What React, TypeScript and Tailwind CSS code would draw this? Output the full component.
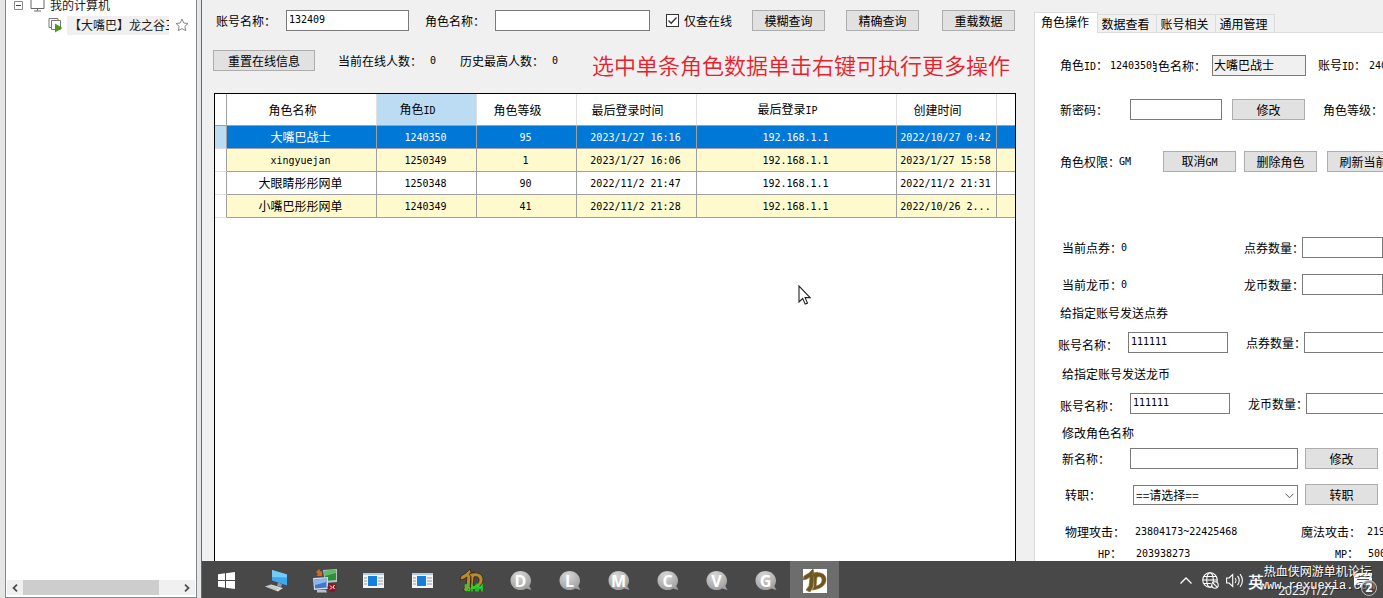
import React from "react";

const mono = "font-['DejaVu_Sans_Mono','Noto_Sans_CJK_SC',monospace] text-[10px]";
const field =
  "h-[21px] shrink-0 border border-[#7a7a7a] bg-white px-0.5 pb-[3px] outline-none font-['DejaVu_Sans_Mono','Noto_Sans_CJK_SC',monospace] text-[10px] leading-[16px]";
const btn =
  "flex h-[21px] shrink-0 items-center justify-center overflow-hidden whitespace-nowrap border border-[#adadad] bg-[#e1e1e1]";

/* Latin runs are set in the monospace face, half an ideograph wide. */
function Mix({ text }: { text: string }) {
  return (
    <>
      {text.split(/([\x20-\x7e]+)/).map((part, i) =>
        i % 2 ? (
          <span key={i} className={mono + " whitespace-pre"}>
            {part}
          </span>
        ) : (
          part
        )
      )}
    </>
  );
}

function Btn({ text, className = "w-[73px]" }: { text: string; className?: string }) {
  return (
    <button type="button" className={`${btn} ${className}`}>
      <span>
        <Mix text={text} />
      </span>
    </button>
  );
}

function Sidebar() {
  return (
    <aside className="flex w-[202px] shrink-0 border-r border-[#696969] bg-[#e6e6e6] pl-[5px] pr-1">
      <div className="flex min-w-0 flex-1 flex-col overflow-hidden border-x border-b border-[#828790] bg-white text-[#1a1a1a]">
        <div className="-mt-[5px] flex h-5 shrink-0 items-center pl-2">
          <svg className="mr-[7px] size-[9px]" viewBox="0 0 9 9" fill="none" stroke="#8c8c8c">
            <path d="M.5.5h8v8h-8z" />
            <path d="M2 4.500h5" stroke="#444" />
          </svg>
          <svg className="mr-[5px] h-[13px] w-[15px]" viewBox="0 0 15 13" fill="none" stroke="#666">
            <path d="M1 .5h13v9H1zM7.500 9.500v2M4 12h7" />
          </svg>
          <span>我的计算机</span>
        </div>
        <div className="flex h-5 shrink-0 items-center pl-[42px]">
          <svg className="mr-1 h-4 w-[15px]" viewBox="0 0 15 16" fill="none" stroke="#777">
            <path d="M3 10.500H1V1.500h9v2" />
            <path d="M3.500 3.500h9v9h-9z" fill="#fff" />
            <path d="M7 6.500l7.500 4.500L7 15.500z" fill="#4a9a1c" stroke="none" />
          </svg>
          <span className="h-[19px] w-[102px] overflow-hidden whitespace-nowrap bg-[#f0f0f0] pl-0.5 leading-[17px]">
            【大嘴巴】龙之谷三
          </span>
          <svg className="ml-[6px] size-[14px]" viewBox="0 0 14 14" fill="none" stroke="#888">
            <path d="M7 1l1.800 4 4.200.5-3.200 2.900 1 4.300L7 10.600 3.200 12.700l1-4.300L1 5.500 5.200 5z" />
          </svg>
        </div>
        <div className="mx-px mb-0.5 mt-auto flex h-[15px] shrink-0 items-stretch bg-[#f0f0f0]">
          <button type="button" aria-label="向左" className="flex w-4 items-center justify-center">
            <svg className="h-2 w-[6px]" viewBox="0 0 6 8" fill="none" stroke="#505050" strokeWidth="1.800">
              <path d="M5 .7L1.500 4 5 7.300" />
            </svg>
          </button>
          <div className="flex-1">
            <div className="h-full w-[87%] bg-[#cdcdcd]" />
          </div>
          <button type="button" aria-label="向右" className="flex w-4 items-center justify-center">
            <svg className="h-2 w-[6px]" viewBox="0 0 6 8" fill="none" stroke="#505050" strokeWidth="1.800">
              <path d="M1 .7L4.500 4 1 7.300" />
            </svg>
          </button>
        </div>
      </div>
    </aside>
  );
}

const columns = [
  { title: "角色名称", width: "w-[150px]" },
  { title: "角色ID", width: "w-[100px]" },
  { title: "角色等级", width: "w-[100px]" },
  { title: "最后登录时间", width: "w-[120px]" },
  { title: "最后登录IP", width: "w-[200px]" },
  { title: "创建时间", width: "w-[100px]" },
];

const rows = [
  ["大嘴巴战士", "1240350", "95", "2023/1/27 16:16", "192.168.1.1", "2022/10/27 0:42"],
  ["xingyuejan", "1250349", "1", "2023/1/27 16:06", "192.168.1.1", "2023/1/27 15:58"],
  ["大眼睛彤彤网单", "1250348", "90", "2022/11/2 21:47", "192.168.1.1", "2022/11/2 21:31"],
  ["小嘴巴彤彤网单", "1240349", "41", "2022/11/2 21:28", "192.168.1.1", "2022/10/26 2..."],
];

function RoleTable() {
  return (
    <div className="relative mt-[22px] min-h-0 flex-1 overflow-hidden border-x border-t border-black bg-white">
      <table className="w-full table-fixed border-separate border-spacing-0">
        <thead>
          <tr className="h-8">
            <th className="w-3 border-b border-r border-[#a0a0a0] p-0" />
            {columns.map((c, i) => (
              <th
                key={c.title}
                className={`${c.width} border-b border-r border-b-[#a0a0a0] border-r-[#e0e0e0] p-0 pr-[18px] font-normal ${
                  i === 1 ? "bg-[#bcdcf4]" : ""
                }`}
              >
                <Mix text={c.title} />
              </th>
            ))}
            <th className="border-b border-[#a0a0a0] p-0" />
          </tr>
        </thead>
        <tbody>
          {rows.map((r, i) => {
            const tone = i === 0 ? "bg-[#0078d7] text-white" : i % 2 ? "bg-[#fffacd]" : "bg-white";
            return (
              <tr key={r[1]} className="h-[23px]">
                <td
                  className={`border-b border-r border-b-[#e0e0e0] border-r-[#a0a0a0] p-0 ${
                    i === 0 ? "bg-[#bcdcf4]" : ""
                  }`}
                />
                {r.map((v, j) => (
                  <td
                    key={j}
                    className={`${tone} whitespace-nowrap border-b border-r border-[#a0a0a0] p-0 pr-0.5 text-center`}
                  >
                    <Mix text={v} />
                  </td>
                ))}
                <td className={`${tone} border-b border-[#a0a0a0] p-0`} />
              </tr>
            );
          })}
        </tbody>
      </table>
      <svg
        className="absolute left-[583px] top-[191px] h-5 w-[13px]"
        viewBox="0 0 13 20"
        fill="#fff"
        stroke="#222"
        strokeWidth="1.100"
      >
        <path d="M1 1v16l3.700-3.500 2.500 5.600 2.300-1-2.400-5.500h5z" />
      </svg>
    </div>
  );
}

function MainPanel() {
  return (
    <main className="flex min-w-0 flex-1 flex-col pl-3 pr-[18px] pt-[10px]">
      <div className="flex h-[21px] shrink-0 items-center whitespace-nowrap">
        <label htmlFor="account" className="ml-0.5 w-[70px]">
          账号名称：
        </label>
        <input id="account" defaultValue="132409" className={`${field} w-[123px]`} />
        <label htmlFor="role" className="ml-4 w-[70px]">
          角色名称：
        </label>
        <input id="role" className={`${field} w-[155px]`} />
        <label className="ml-4 mr-5 flex items-center gap-[5px]">
          <span className="relative flex size-[13px]">
            <input
              type="checkbox"
              defaultChecked
              className="peer size-[13px] appearance-none border border-[#333] bg-white"
            />
            <svg
              className="pointer-events-none absolute inset-0 hidden size-[13px] peer-checked:block"
              viewBox="0 0 13 13"
              fill="none"
              stroke="#333"
              strokeWidth="1.300"
            >
              <path d="M2.500 6.500l2.700 2.800 5.300-5.800" />
            </svg>
          </span>
          仅查在线
        </label>
        <Btn text="模糊查询" />
        <Btn text="精确查询" className="ml-[21px] w-[73px]" />
        <Btn text="重载数据" className="ml-[23px] w-[73px]" />
      </div>
      <div className="mt-[19px] flex h-[21px] shrink-0 items-center whitespace-nowrap">
        <Btn text="重置在线信息" className="-ml-px w-[102px]" />
        <span className="ml-[23px] w-[92px]">当前在线人数：</span>
        <span className={`${mono} w-[30px]`}>0</span>
        <span className="w-[92px]">历史最高人数：</span>
        <span className={`${mono} w-10`}>0</span>
        <strong className="pt-[7px] text-[22px] font-[350] leading-[22px] text-[#e8202c]">
          选中单条角色数据单击右键可执行更多操作
        </strong>
      </div>
      <RoleTable />
    </main>
  );
}

function Row({ className, children }: { className: string; children: React.ReactNode }) {
  return <div className={`flex shrink-0 items-center whitespace-nowrap ${className}`}>{children}</div>;
}

function RolePanel() {
  return (
    <section className="flex w-[349px] shrink-0 flex-col overflow-hidden pt-3">
      <div role="tablist" className="z-10 -mb-px flex shrink-0 items-end">
        <button
          type="button"
          role="tab"
          aria-selected="true"
          className="h-[21px] w-16 border border-b-0 border-[#dcdcdc] bg-white pb-[3px] pr-0.5 leading-[17px]"
        >
          角色操作
        </button>
        {["数据查看", "账号相关", "通用管理"].map((t) => (
          <button
            key={t}
            type="button"
            role="tab"
            aria-selected="false"
            className="h-[19px] w-[59px] border border-l-0 border-[#dcdcdc] bg-[#f0f0f0] pr-[3px] leading-[17px]"
          >
            {t}
          </button>
        ))}
      </div>
      <div className="min-h-0 flex-1 overflow-hidden border-l border-t border-[#dcdcdc] bg-white pl-[25px]">
        <Row className="mt-[22px] h-[21px]">
          <span className="w-[50px] shrink-0">
            <Mix text="角色ID：" />
          </span>
          <span className={`${mono} w-[43px] shrink-0`}>1240350</span>
          <label htmlFor="roleName" className="mr-[6px] flex w-[53px] shrink-0 justify-end overflow-hidden">
            角色名称：
          </label>
          <input
            id="roleName"
            readOnly
            defaultValue="大嘴巴战士"
            className="h-[21px] w-[94px] shrink-0 border border-[#7a7a7a] bg-[#f0f0f0] px-px pb-[3px] leading-[16px] outline-none"
          />
          <span className="ml-3 w-[51px] shrink-0">
            <Mix text="账号ID：" />
          </span>
          <span className={mono}>240350</span>
        </Row>
        <Row className="mt-[23px] h-[21px]">
          <label htmlFor="pwd" className="w-[70px] shrink-0">
            新密码：
          </label>
          <input id="pwd" className={`${field} mr-[10px] w-[92px]`} />
          <Btn text="修改" />
          <span className="ml-[18px]">角色等级：</span>
        </Row>
        <Row className="mt-[31px] h-[21px]">
          <span className="w-[59px] shrink-0">角色权限：</span>
          <span className={`${mono} w-11 shrink-0`}>GM</span>
          <Btn text="取消GM" />
          <Btn text="删除角色" className="ml-2 w-[73px]" />
          <Btn text="刷新当前" className="ml-[10px] w-[73px]" />
        </Row>
        <Row className="mt-[65px] h-[21px] pl-0.5">
          <span className="w-[59px] shrink-0">当前点券：</span>
          <span className={`${mono} w-[123px] shrink-0`}>0</span>
          <label htmlFor="coupon" className="w-[58px] shrink-0">
            点券数量：
          </label>
          <input id="coupon" className={`${field} w-[81px]`} />
        </Row>
        <Row className="mt-4 h-[21px] pl-0.5">
          <span className="w-[59px] shrink-0">当前龙币：</span>
          <span className={`${mono} w-[123px] shrink-0`}>0</span>
          <label htmlFor="coin" className="w-[58px] shrink-0">
            龙币数量：
          </label>
          <input id="coin" className={`${field} w-[81px]`} />
        </Row>
        <Row className="mt-[9px] h-[18px]">给指定账号发送点券</Row>
        <Row className="-ml-0.5 mt-[10px] h-[21px]">
          <label htmlFor="sendA" className="w-[70px] shrink-0 pt-1">
            账号名称：
          </label>
          <input id="sendA" defaultValue="111111" className={`${field} mr-[18px] w-[100px]`} />
          <label htmlFor="sendACount" className="w-[58px] shrink-0">
            点券数量：
          </label>
          <input id="sendACount" className={`${field} w-[100px]`} />
        </Row>
        <Row className="mt-3 h-[18px] pl-0.5">给指定账号发送龙币</Row>
        <Row className="mt-[10px] h-[21px]">
          <label htmlFor="sendB" className="w-[70px] shrink-0 pt-1">
            账号名称：
          </label>
          <input id="sendB" defaultValue="111111" className={`${field} mr-[18px] w-[100px]`} />
          <label htmlFor="sendBCount" className="w-[58px] shrink-0">
            龙币数量：
          </label>
          <input id="sendBCount" className={`${field} w-[100px]`} />
        </Row>
        <Row className="mt-[10px] h-[18px] pl-0.5">修改角色名称</Row>
        <Row className="mt-[6px] h-[21px] pl-0.5">
          <label htmlFor="newName" className="w-[68px] shrink-0">
            新名称：
          </label>
          <input id="newName" className={`${field} mr-[7px] w-[168px]`} />
          <Btn text="修改" />
        </Row>
        <Row className="mt-[15px] h-[21px] pl-[5px]">
          <label htmlFor="job" className="w-[68px] shrink-0">
            转职：
          </label>
          <span className="relative mr-[7px] flex w-[165px] shrink-0">
            <select
              id="job"
              className="h-5 w-full appearance-none border border-[#7a7a7a] bg-white px-0.5 leading-[16px] outline-none"
            >
              <option>==请选择==</option>
            </select>
            <svg
              className="pointer-events-none absolute right-1 top-2 h-[6px] w-[9px]"
              viewBox="0 0 9 6"
              fill="none"
              stroke="#555"
            >
              <path d="M.5.700l4 4 4-4" />
            </svg>
          </span>
          <Btn text="转职" />
        </Row>
        <Row className="mt-[18px] h-[18px] pl-[5px]">
          <span className="w-[70px] shrink-0">物理攻击：</span>
          <span className={`${mono} w-[166px] shrink-0`}>23804173~22425468</span>
          <span className="w-[66px] shrink-0">魔法攻击：</span>
          <span className={mono}>219041</span>
        </Row>
        <Row className="mt-1 h-[18px] pl-[5px]">
          <span className="w-[71px] shrink-0 pl-[33px]">
            <Mix text="HP：" />
          </span>
          <span className={`${mono} w-[165px] shrink-0`}>203938273</span>
          <span className="w-[67px] shrink-0 pl-[34px]">
            <Mix text="MP：" />
          </span>
          <span className={mono}>500000</span>
        </Row>
      </div>
    </section>
  );
}

function Orb({ letter }: { letter: string }) {
  return (
    <span className="relative flex size-[21px] items-center justify-center">
      <svg className="absolute inset-0 size-[23px]" viewBox="0 0 23 23">
        <defs>
          <radialGradient id={`orb${letter}`} cx="40%" cy="25%" r="80%">
            <stop offset="0" stopColor="#d8d8d8" />
            <stop offset="1" stopColor="#9c9c9c" />
          </radialGradient>
        </defs>
        <path
          d="M10.500 1C4.900 1 .5 5.200.5 10.400S4.900 20 10.500 20c2.100 0 4-.5 5.600-1.500L21.500 20l-2.200-4.100c1.100-1.500 1.700-3.400 1.700-5.500C21 5.200 16.100 1 10.500 1z"
          fill={`url(#orb${letter})`}
        />
      </svg>
      <b className="relative font-['Open_Sans',sans-serif] text-[16px] leading-[20px] text-white">{letter}</b>
    </span>
  );
}

function DragonMark({ gm = false }: { gm?: boolean }) {
  return (
    <svg className="size-6" viewBox="0 0 24 24">
      {!gm && <path fill="#fff" d="M0 0h24v24H0z" />}
      <g fill={gm ? "#b98a35" : "#6b5520"} stroke={gm ? "#2a1a08" : "#8b7434"} strokeWidth=".7">
        <path d="M1 7l5-3 4-4 1 4 4-1-4 4-1 11-3 5-4-2 3-4 1-9-3 2-4 1z" />
        <path fillRule="evenodd" d="M9 5c8-3 14 0 14 5.500S18 20 9 21l2-3V7.500zm5 3l-1 9c4-1 6-3 6-6s-2-4-5-3z" />
      </g>
      {gm && (
        <path
          d="M9.500 16H5.500v2.500h4V21.500H5M12 22.500v-6l2 3 2-3v6M18 22.500v-6l2 3 2-3v6"
          fill="none"
          stroke="#18e020"
          strokeWidth="1.500"
        />
      )}
    </svg>
  );
}

const WindowIcon = (
  <svg className="h-4 w-[21px]" viewBox="0 0 21 16">
    <path fill="#f4f4f4" d="M0 0h21v15H0z" />
    <path fill="#b9cbdc" d="M0 0h21v2H0z" />
    <path fill="#1580dc" d="M5 3h9v10H5z" />
    <path d="M1 5h3M1 8h3M1 11h3M15 5h5M15 8h5M15 11h5" stroke="#909aa5" />
  </svg>
);

const apps = [
  {
    name: "开始",
    icon: (
      <svg className="size-[17px]" viewBox="0 0 17 17" fill="#fff">
        <path d="M0 2.300L7 1.300v6.700H0zM8 1.200L17 0v8H8zM0 9h7v6.700l-7-1zM8 9h9v8l-9-1.200z" />
      </svg>
    ),
  },
  {
    name: "电脑",
    icon: (
      <svg className="h-[22px] w-6" viewBox="0 0 24 22">
        <path d="M8 0l15 4.500v11L8 10.500z" fill="#3aa9ee" />
        <path d="M8 0l15 4.500v3L8 7z" fill="#73cbfa" />
        <path d="M14 12.500l4 1.500-1 3-4-1z" fill="#8a9aa5" />
        <path d="M1 16.500l6-2 12 3.500-5 3.500z" fill="#dcdcd6" />
        <path d="M3 16.500l10 3.500M5 15.500l10 3.500" stroke="#aaa" strokeWidth=".7" />
      </svg>
    ),
  },
  {
    name: "远程连接",
    icon: (
      <svg className="size-6" viewBox="0 0 24 24">
        <path d="M10 1l14-1v13l-12 1z" fill="#b4c4ba" />
        <path d="M11.500 2l11.500-1v10l-11 1z" fill="#2f8f3c" />
        <path d="M11.500 2l11.500-1v3L12 7z" fill="#62bd62" />
        <path d="M0 9l15-1v12L1 21z" fill="#cdd8ea" />
        <path d="M1.500 10.500l12-1v9l-11.500 1z" fill="#3f78c8" />
        <path d="M1.500 10.500l12-1v3.500L2 16z" fill="#8eb6ee" />
        <path d="M4 21h9l1 2.500H4z" fill="#b8c0cc" />
        <path d="M6 0l2 3 1-1v5H3l2-1.500L3 3z" fill="#d06a1c" />
        <circle cx="19" cy="18.500" r="4.500" fill="#8f1626" />
        <path d="M17 16.500l2 2-2 2M21.500 16l-1.500 2 1.500 2" stroke="#fff" fill="none" />
      </svg>
    ),
  },
  { name: "窗口一", icon: WindowIcon },
  { name: "窗口二", icon: WindowIcon },
  { name: "龙之谷 GM", icon: <DragonMark gm /> },
  ...["D", "L", "M", "C", "V", "G"].map((l) => ({ name: l, icon: <Orb letter={l} /> })),
  { name: "龙之谷", icon: <DragonMark /> },
];

function Taskbar() {
  return (
    <footer className="relative flex h-[37px] shrink-0 items-stretch bg-[#484848] text-white">
      {apps.map((a, i) => (
        <button
          key={a.name}
          type="button"
          aria-label={a.name}
          className={`flex w-[49px] shrink-0 items-center justify-center pt-0.5 ${
            i === apps.length - 1 ? "bg-[#6d6d6d]" : ""
          }`}
        >
          {a.icon}
        </button>
      ))}
      <div className="ml-auto flex items-center pr-[11px] pt-0.5">
        <svg className="mr-[10px] h-[7px] w-3" viewBox="0 0 12 7" fill="none" stroke="#fff" strokeWidth="1.300">
          <path d="M.5 6.500L6 1l5.500 5.500" />
        </svg>
        <svg className="mr-[7px] size-[17px]" viewBox="0 0 17 17" fill="none" stroke="#fff" strokeWidth="1.100">
          <circle cx="8" cy="8" r="7.300" />
          <ellipse cx="8" cy="8" rx="3.300" ry="7.300" />
          <path d="M.7 8h14.600M1.800 4.500h12.400M1.800 11.500h7" />
          <circle cx="13" cy="13" r="3.200" fill="#484848" />
          <path d="M10.800 10.800l4.400 4.400" />
        </svg>
        <svg className="mr-[5px] h-[15px] w-[17px]" viewBox="0 0 17 15" fill="none" stroke="#fff" strokeWidth="1.100">
          <path d="M.6 5h2.500l3.600-3.500v12L3.100 10H.6zM9 5c1.200 1.300 1.200 3.700 0 5M11.500 3c2.300 2.400 2.300 6.600 0 9M14 1.200c3.200 3.500 3.200 9.100 0 12.600" />
        </svg>
        <span className="w-[106px] text-[16px] font-medium leading-[18px]">英</span>
        <svg className="h-[15px] w-[18px]" viewBox="0 0 18 15">
          <path d="M0 0h18v12H9l-3 3v-3H0z" fill="#fff" />
          <path d="M3 3.500h12M3 6.500h12M3 9.500h6" stroke="#555" />
        </svg>
      </div>
      <time className="absolute bottom-0 right-12 font-['Open_Sans',sans-serif] text-[12px] leading-[14px] text-white">
        2023/1/27
      </time>
      <p className="absolute right-2 top-[3px] whitespace-nowrap leading-[13px] [text-shadow:1px_1px_0_#0008]">
        热血侠网游单机论坛
        <br />
        <span className="-ml-1 font-['Liberation_Mono',monospace]">www.rexuexia.com</span>
      </p>
      <span className="absolute bottom-0.5 right-[6px] flex size-4 items-center justify-center rounded-full border border-[#bbb] bg-[#484848]/60 font-['Open_Sans',sans-serif] text-[12px] font-bold leading-[14px]">
        2
      </span>
    </footer>
  );
}

export default function App() {
  return (
    <div className="flex h-screen overflow-hidden bg-[#f0f0f0] font-['Noto_Sans_CJK_SC',sans-serif] text-[12px] leading-[18px] text-black">
      <Sidebar />
      <div className="flex min-w-0 flex-1 flex-col">
        <div className="flex min-h-0 flex-1">
          <MainPanel />
          <RolePanel />
        </div>
        <Taskbar />
      </div>
    </div>
  );
}
